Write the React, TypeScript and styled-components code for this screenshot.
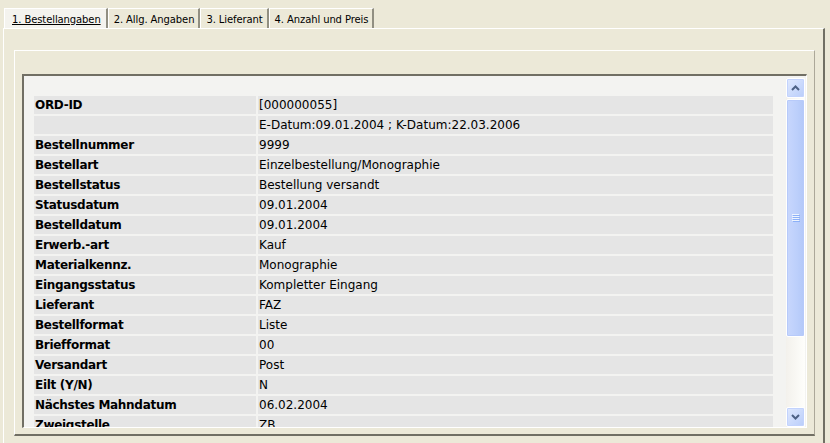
import styled, { createGlobalStyle } from 'styled-components';

const GlobalStyle = createGlobalStyle`
  body {
    margin: 0;
    background: #ece9d8;
    font-family: 'DejaVu Sans', Verdana, sans-serif;
  }
`;

const Window = styled.div`
  width: 830px;
  height: 443px;
  overflow: hidden;
  background: #ece9d8;
  padding-top: 8px;
  box-sizing: border-box;
`;

const TabStrip = styled.div`
  display: flex;
  padding-left: 4px;
  height: 20px;
`;

const Tab = styled.div<{ $active?: boolean }>`
  display: flex;
  align-items: center;
  padding: ${(p) => (p.$active ? '1px 5px 0 7px' : '1px 4px 0 5px')};
  height: 20px;
  box-sizing: border-box;
  font-size: 10px;
  letter-spacing: -0.1px;
  color: #000;
  background: ${(p) => (p.$active ? '#f4f3ee' : '#ece9d8')};
  border-top: 1px solid #fff;
  border-left: 1px solid #fff;
  border-right: 2px solid #918f82;
  text-decoration: ${(p) => (p.$active ? 'underline' : 'none')};
`;

const TabPane = styled.div`
  margin: 0 5px 0 3px;
  height: 420px;
  border-top: 1px solid #fff;
  border-left: 1px solid #fff;
  border-right: 2px solid #716f64;
  box-sizing: border-box;
  padding: 21px 8px 0 10px;
`;

const Panel = styled.div`
  height: 386px;
  border-top: 1px solid #fff;
  border-left: 1px solid #fff;
  border-right: 1px solid #aca899;
  border-bottom: 2px solid #716f64;
  box-sizing: border-box;
  padding: 23px 7px 7px 7px;
`;

const ScrollBox = styled.div`
  display: flex;
  height: 354px;
  background: #f3f3f1;
  border-top: 2px solid #716f64;
  border-left: 2px solid #716f64;
  border-right: 1px solid #fff;
  border-bottom: 1px solid #fff;
  box-sizing: border-box;
  overflow: hidden;
`;

const List = styled.div`
  flex: 1;
  padding: 20px 13px 0 10px;
  display: flex;
  flex-direction: column;
  gap: 2px;
`;

const Row = styled.div`
  display: grid;
  grid-template-columns: 222px 1fr;
  gap: 2px;
  height: 18px;
  flex-shrink: 0;
`;

const Cell = styled.div<{ $bold?: boolean }>`
  background: #e5e5e5;
  display: flex;
  align-items: center;
  padding-left: 1px;
  font-size: 12px;
  font-weight: ${(p) => (p.$bold ? 700 : 400)};
  letter-spacing: ${(p) => (p.$bold ? '-0.3px' : '0')};
  color: #000;
  white-space: nowrap;
`;

const ScrollBar = styled.div`
  width: 19px;
  margin: 2px 1px 0 0;
  display: flex;
  flex-direction: column;
  background: linear-gradient(to right, #f3f1ec, #fefefb);
`;

const ScrollButton = styled.div`
  height: 18px;
  flex-shrink: 0;
  border: 1px solid #fff;
  border-radius: 2px;
  background: linear-gradient(to bottom right, #e0e9fe, #b9cdfa);
  box-shadow: inset 0 0 0 1px #c3d3fd;
  display: flex;
  align-items: center;
  justify-content: center;
`;

const Thumb = styled.div`
  height: 236px;
  margin-top: 1px;
  border: 1px solid #fff;
  border-radius: 2px;
  background: linear-gradient(to right, #c8d7fd, #bccffb 60%, #b3c8f8);
  box-shadow: inset 0 0 0 1px #b7cafa;
  display: flex;
  align-items: center;
  justify-content: center;
`;

const Track = styled.div`
  flex: 1;
`;

const Arrow = ({ up }: { up?: boolean }) => (
  <svg width="9" height="6" viewBox="0 0 9 6">
    <path
      d={up ? 'M1 5 L4.5 1.5 L8 5' : 'M1 1 L4.5 4.5 L8 1'}
      fill="none"
      stroke="#4d6185"
      strokeWidth="2"
    />
  </svg>
);

const Grip = () => (
  <svg width="8" height="8" viewBox="0 0 8 8">
    {[0, 2, 4, 6].map((y) => (
      <g key={y}>
        <rect x="0" y={y} width="7" height="1" fill="#eef4fe" />
        <rect x="1" y={y + 1} width="7" height="1" fill="#8cb0f8" />
      </g>
    ))}
  </svg>
);

const rows: [string, string][] = [
  ['ORD-ID', '[000000055]'],
  ['', 'E-Datum:09.01.2004 ; K-Datum:22.03.2006'],
  ['Bestellnummer', '9999'],
  ['Bestellart', 'Einzelbestellung/Monographie'],
  ['Bestellstatus', 'Bestellung versandt'],
  ['Statusdatum', '09.01.2004'],
  ['Bestelldatum', '09.01.2004'],
  ['Erwerb.-art', 'Kauf'],
  ['Materialkennz.', 'Monographie'],
  ['Eingangsstatus', 'Kompletter Eingang'],
  ['Lieferant', 'FAZ'],
  ['Bestellformat', 'Liste'],
  ['Briefformat', '00'],
  ['Versandart', 'Post'],
  ['Eilt (Y/N)', 'N'],
  ['Nächstes Mahndatum', '06.02.2004'],
  ['Zweigstelle', 'ZB'],
];

const tabs = ['1. Bestellangaben', '2. Allg. Angaben', '3. Lieferant', '4. Anzahl und Preis'];

const App = () => {
  return (
    <Window>
      <GlobalStyle />
      <TabStrip>
        {tabs.map((t, i) => (
          <Tab key={t} $active={i === 0}>
            {t}
          </Tab>
        ))}
      </TabStrip>
      <TabPane>
        <Panel>
          <ScrollBox>
            <List>
              {rows.map(([label, value], i) => (
                <Row key={i}>
                  <Cell $bold>{label}</Cell>
                  <Cell>{value}</Cell>
                </Row>
              ))}
            </List>
            <ScrollBar>
              <ScrollButton>
                <Arrow up />
              </ScrollButton>
              <Thumb>
                <Grip />
              </Thumb>
              <Track />
              <ScrollButton>
                <Arrow />
              </ScrollButton>
            </ScrollBar>
          </ScrollBox>
        </Panel>
      </TabPane>
    </Window>
  );
};

export default App;
